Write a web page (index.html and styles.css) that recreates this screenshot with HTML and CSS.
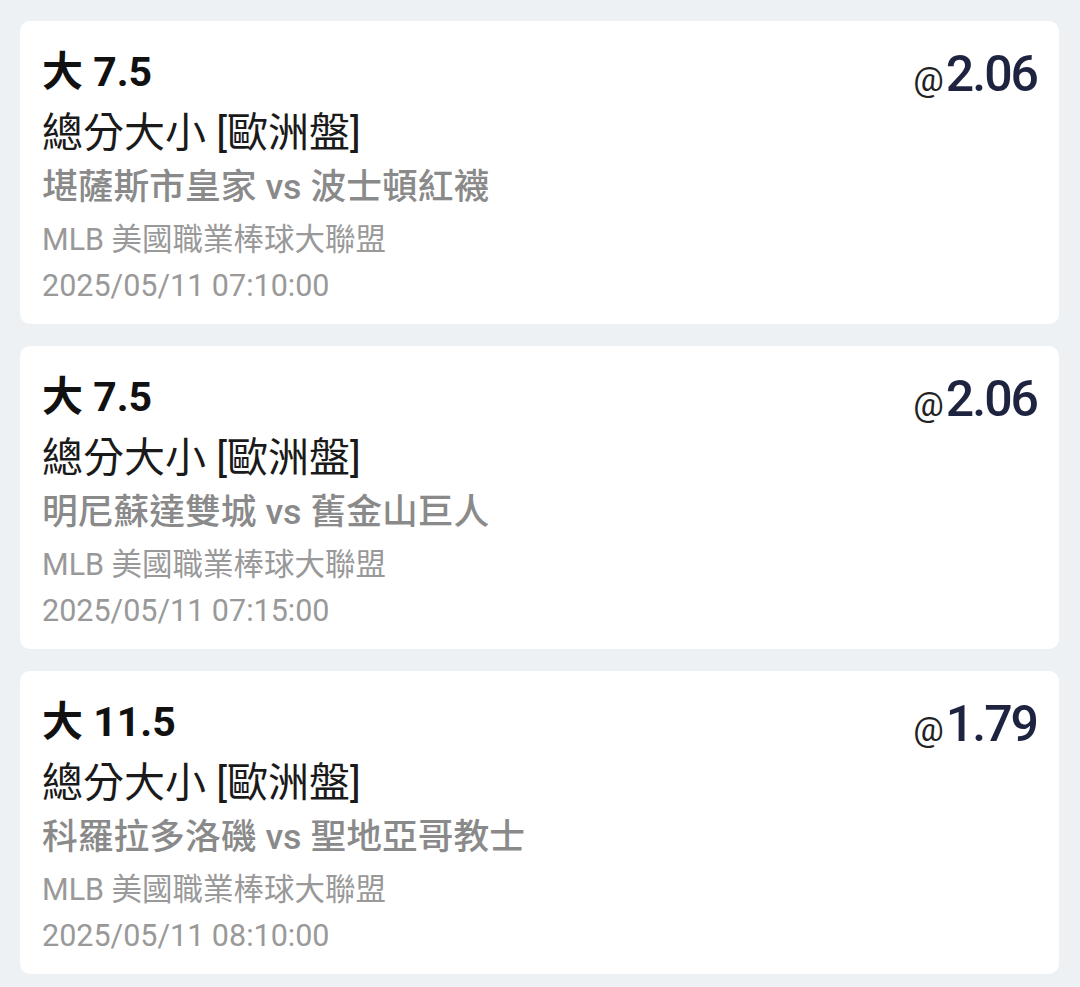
FILE: index.html
```html
<!DOCTYPE html>
<html lang="zh-Hant">
<head>
<meta charset="utf-8">
<link rel="stylesheet" href="styles.css">
</head>
<body>
<div class="list">
  <div class="card">
    <div class="info">
      <div class="pick">大 7.5</div>
      <div class="market">總分大小 [歐洲盤]</div>
      <div class="teams">堪薩斯市皇家 vs 波士頓紅襪</div>
      <div class="league">MLB 美國職業棒球大聯盟</div>
      <div class="time">2025/05/11 07:10:00</div>
    </div>
    <div class="odds"><span class="at">@</span><span class="num">2.06</span></div>
  </div>
  <div class="card">
    <div class="info">
      <div class="pick">大 7.5</div>
      <div class="market">總分大小 [歐洲盤]</div>
      <div class="teams">明尼蘇達雙城 vs 舊金山巨人</div>
      <div class="league">MLB 美國職業棒球大聯盟</div>
      <div class="time">2025/05/11 07:15:00</div>
    </div>
    <div class="odds"><span class="at">@</span><span class="num">2.06</span></div>
  </div>
  <div class="card">
    <div class="info">
      <div class="pick">大 11.5</div>
      <div class="market">總分大小 [歐洲盤]</div>
      <div class="teams">科羅拉多洛磯 vs 聖地亞哥教士</div>
      <div class="league">MLB 美國職業棒球大聯盟</div>
      <div class="time">2025/05/11 08:10:00</div>
    </div>
    <div class="odds"><span class="at">@</span><span class="num">1.79</span></div>
  </div>
</div>
</body>
</html>
```
FILE: styles.css
```css
html, body {
  margin: 0;
  padding: 0;
  background: #eef1f4;
}
body {
  font-family: Roboto, "Noto Sans CJK TC", sans-serif;
  width: 1080px;
  height: 987px;
  overflow: hidden;
}
.list {
  display: flex;
  flex-direction: column;
  gap: 22px;
  padding: 21px 21px 0 20px;
}
.card {
  background: #ffffff;
  border-radius: 10px;
  height: 303px;
  box-sizing: border-box;
  display: flex;
  justify-content: space-between;
  align-items: flex-start;
  padding: 26px 22px 0 22px;
}
.info {
  display: flex;
  flex-direction: column;
}
.pick {
  font-size: 41px;
  font-weight: 700;
  line-height: 50px;
  color: #111111;
}
.market {
  font-size: 41px;
  font-weight: 400;
  line-height: 50px;
  margin-top: 11px;
  color: #1a1a1a;
}
.teams {
  font-size: 35.75px;
  font-weight: 500;
  line-height: 46px;
  margin-top: 6px;
  color: #8a8a8a;
}
.league {
  font-size: 30.5px;
  line-height: 40px;
  margin-top: 10px;
  color: #999999;
}
.time {
  font-size: 30.5px;
  line-height: 40px;
  margin-top: 6px;
  color: #999999;
}
.odds {
  display: flex;
  align-items: baseline;
  line-height: 56px;
  margin-top: -1px;
}
.at {
  font-size: 34px;
  color: #222222;
  margin-right: 2px;
}
.num {
  font-size: 50px;
  font-weight: 500;
  letter-spacing: -2px;
  color: #1e2340;
}
```
